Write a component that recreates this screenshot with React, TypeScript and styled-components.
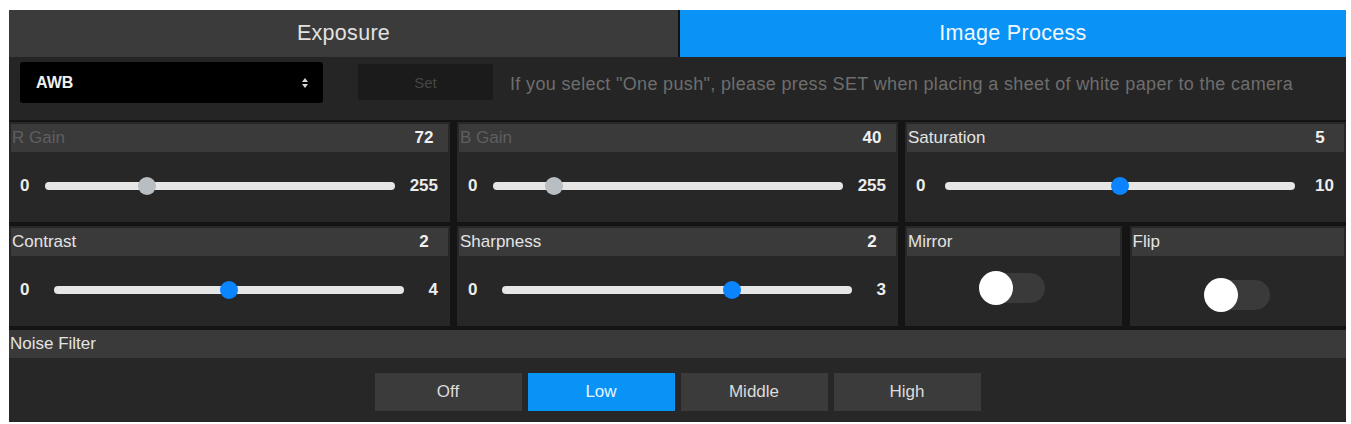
import React from 'react';
import styled, { createGlobalStyle } from 'styled-components';

const GlobalStyle = createGlobalStyle`
  html, body {
    margin: 0;
    padding: 0;
    background: #ffffff;
    font-family: 'Liberation Sans', Arial, sans-serif;
  }
`;

type SliderProps = {
  label: string;
  value: number;
  min: number;
  max: number;
  disabled?: boolean;
};

const sliders: SliderProps[] = [
  { label: 'R Gain', value: 72, min: 0, max: 255, disabled: true },
  { label: 'B Gain', value: 40, min: 0, max: 255, disabled: true },
  { label: 'Saturation', value: 5, min: 0, max: 10 },
  { label: 'Contrast', value: 2, min: 0, max: 4 },
  { label: 'Sharpness', value: 2, min: 0, max: 3 },
];

const noiseLevels = ['Off', 'Low', 'Middle', 'High'];

const TRACK_W = 350;
const THUMB = 18;

const SliderCell: React.FC<SliderProps> = ({ label, value, min, max, disabled }) => {
  const frac = (value - min) / (max - min);
  const left = frac * (TRACK_W - THUMB);
  return (
    <Cell>
      <Header>
        <Label $dim={disabled}>{label}</Label>
        <Value>{value}</Value>
      </Header>
      <SliderBody>
        <Bound>{min}</Bound>
        <Track>
          <Thumb $disabled={disabled} style={{ left }} />
        </Track>
        <Bound>{max}</Bound>
      </SliderBody>
    </Cell>
  );
};

const ToggleCell: React.FC<{ label: string; drop?: number }> = ({ label, drop = 0 }) => (
  <Cell>
    <Header>
      <Label>{label}</Label>
    </Header>
    <ToggleBody>
      <Switch $drop={drop}>
        <Knob />
      </Switch>
    </ToggleBody>
  </Cell>
);

const App: React.FC = () => {
  return (
    <>
      <GlobalStyle />
      <Page>
        <Panel>
          <Tabs>
            <Tab>Exposure</Tab>
            <Tab $active>Image Process</Tab>
          </Tabs>
          <WhiteBalanceRow>
            <Select>
              <span>AWB</span>
              <svg width="8" height="12" viewBox="0 0 8 12">
                <path d="M4 1 L7 5 H1 Z" fill="#d8d8d8" />
                <path d="M4 11 L7 7 H1 Z" fill="#d8d8d8" />
              </svg>
            </Select>
            <SetButton>Set</SetButton>
            <Hint>If you select "One push", please press SET when placing a sheet of white paper to the camera</Hint>
          </WhiteBalanceRow>
          <Grid>
            {sliders.map((s) => (
              <SliderCell key={s.label} {...s} />
            ))}
            <TogglePair>
              <ToggleCell label="Mirror" />
              <ToggleCell label="Flip" drop={7} />
            </TogglePair>
          </Grid>
          <NoiseSection>
            <Header>
              <Label>Noise Filter</Label>
            </Header>
            <NoiseBody>
              {noiseLevels.map((n) => (
                <NoiseButton key={n} $active={n === 'Low'}>
                  {n}
                </NoiseButton>
              ))}
            </NoiseBody>
          </NoiseSection>
        </Panel>
      </Page>
    </>
  );
};

const Page = styled.div`
  padding: 10px 5px 2px 9px;
  background: #ffffff;
`;

const Panel = styled.div`
  width: 1337px;
  height: 412px;
  background: #141414;
  display: flex;
  flex-direction: column;
  overflow: hidden;
`;

const Tabs = styled.div`
  display: grid;
  grid-template-columns: 669px 1fr;
  column-gap: 2px;
  height: 47px;
  background: #101010;
`;

const Tab = styled.div<{ $active?: boolean }>`
  display: flex;
  align-items: center;
  justify-content: center;
  background: ${(p) => (p.$active ? '#0a93f7' : '#3b3b3b')};
  color: ${(p) => (p.$active ? '#f2f8ff' : '#e2e2e2')};
  font-size: 21.5px;
  letter-spacing: 0.3px;
`;

const WhiteBalanceRow = styled.div`
  height: 63px;
  background: #252525;
  display: flex;
  align-items: flex-start;
  padding: 5px 0 0 11px;
  box-sizing: border-box;
`;

const Select = styled.div`
  width: 303px;
  height: 41px;
  box-sizing: border-box;
  background: #000000;
  border-radius: 3px;
  display: flex;
  align-items: center;
  justify-content: space-between;
  padding: 0 14px 0 16px;
  color: #f0f0f0;
  font-size: 16px;
  font-weight: bold;
`;

const SetButton = styled.div`
  width: 135px;
  height: 36px;
  margin: 2px 0 0 35px;
  background: #1b1b1b;
  color: #464646;
  font-size: 15px;
  display: flex;
  align-items: center;
  justify-content: center;
`;

const Hint = styled.div`
  margin: 12px 0 0 17px;
  color: #6e6e6e;
  font-size: 18px;
  letter-spacing: 0.35px;
  white-space: nowrap;
`;

const Grid = styled.div`
  display: grid;
  grid-template-columns: repeat(3, 441px);
  grid-auto-rows: 100px;
  column-gap: 7px;
  row-gap: 4px;
  padding-top: 2px;
`;

const Cell = styled.div`
  background: #272727;
  padding: 2px;
  display: flex;
  flex-direction: column;
  box-sizing: border-box;
`;

const Header = styled.div`
  height: 28px;
  flex: 0 0 28px;
  background: #3a3a3a;
  display: flex;
  align-items: center;
  justify-content: space-between;
  padding-left: 1px;
`;

const Label = styled.span<{ $dim?: boolean }>`
  color: ${(p) => (p.$dim ? '#5f5f5f' : '#e4e4e4')};
  font-size: 17px;
`;

const Value = styled.span`
  min-width: 40px;
  padding-right: 4px;
  text-align: center;
  color: #f0f0f0;
  font-size: 17px;
  font-weight: bold;
`;

const SliderBody = styled.div`
  flex: 1;
  display: flex;
  align-items: center;
  justify-content: space-between;
  padding: 0 10px 0 9px;
`;

const Bound = styled.span`
  color: #ececec;
  font-size: 17px;
  font-weight: bold;
`;

const Track = styled.div`
  position: relative;
  width: ${TRACK_W}px;
  height: 8px;
  border-radius: 4px;
  background: #e6e6e6;
`;

const Thumb = styled.div<{ $disabled?: boolean }>`
  position: absolute;
  top: -5px;
  width: ${THUMB}px;
  height: ${THUMB}px;
  border-radius: 50%;
  background: ${(p) => (p.$disabled ? '#b9bec2' : '#0a84ff')};
`;

const TogglePair = styled.div`
  display: grid;
  grid-template-columns: 1fr 1fr;
  column-gap: 8px;
`;

const ToggleBody = styled.div`
  flex: 1;
  display: flex;
  align-items: center;
  justify-content: center;
`;

const Switch = styled.div<{ $drop: number }>`
  position: relative;
  width: 64px;
  height: 30px;
  margin-top: ${(p) => p.$drop * 2 - 4}px;
  border-radius: 15px;
  background: #3a3a3a;
`;

const Knob = styled.div`
  position: absolute;
  left: -2px;
  top: -2px;
  width: 34px;
  height: 34px;
  border-radius: 50%;
  background: #ffffff;
`;

const NoiseSection = styled.div`
  margin-top: 4px;
  flex: 1;
  background: #272727;
  display: flex;
  flex-direction: column;
`;

const NoiseBody = styled.div`
  display: flex;
  justify-content: center;
  gap: 6px;
  padding-top: 15px;
`;

const NoiseButton = styled.div<{ $active?: boolean }>`
  width: 147px;
  height: 38px;
  display: flex;
  align-items: center;
  justify-content: center;
  background: ${(p) => (p.$active ? '#0a93f7' : '#3b3b3b')};
  color: ${(p) => (p.$active ? '#e8f4ff' : '#dcdcdc')};
  font-size: 17px;
`;

export default App;
